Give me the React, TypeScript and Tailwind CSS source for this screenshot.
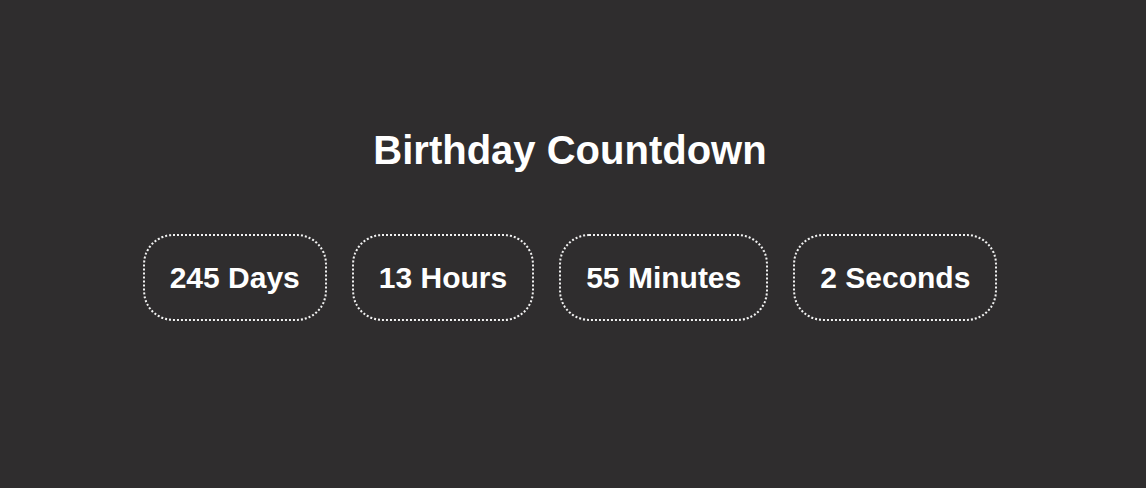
const units = [
  { value: 245, label: "Days" },
  { value: 13, label: "Hours" },
  { value: 55, label: "Minutes" },
  { value: 2, label: "Seconds" },
];

export default function App() {
  return (
    <div className="min-h-screen w-full bg-[#2f2d2e] text-white font-['Liberation_Sans',Arial,sans-serif]">
      <div className="flex flex-col items-center pt-[127px] pr-[6px]">
        <h1 className="text-[40px] leading-[46px] font-bold">Birthday Countdown</h1>

        {/* Countdown boxes */}
        <div className="mt-[61px] flex gap-[25px]">
          {units.map((u) => (
            <div
              key={u.label}
              className="border-2 border-dotted border-[#f2f2f2] rounded-[30px] px-[25px] pt-[24px] pb-[23px] text-[30px] leading-[36px] font-bold whitespace-nowrap"
            >
              {u.value} {u.label}
            </div>
          ))}
        </div>
      </div>
    </div>
  );
}
